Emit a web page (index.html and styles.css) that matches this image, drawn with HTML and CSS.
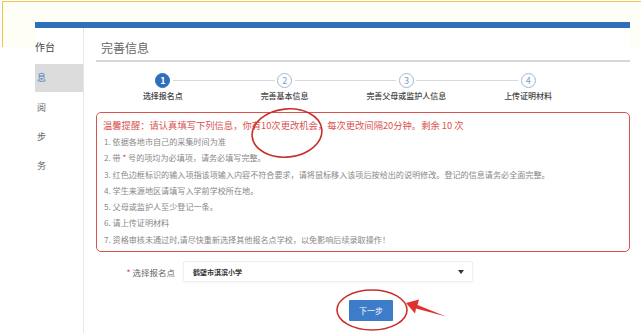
FILE: index.html
```html
<!DOCTYPE html>
<html lang="zh-CN">
<head>
<meta charset="utf-8">
<title>完善信息</title>
<link rel="stylesheet" href="styles.css">
</head>
<body>
<div class="frame"></div>
<div class="page">
  <div class="topbar"></div>
  <div class="layout">
    <aside class="side">
      <div class="side-head">作台</div>
      <div class="side-item active">息</div>
      <div class="side-item first">阅</div>
      <div class="side-item">步</div>
      <div class="side-item">务</div>
    </aside>
    <main class="main">
      <h1 class="title">完善信息</h1>
      <ol class="steps">
        <li class="step done"><span class="num">1</span><span class="label">选择报名点</span></li>
        <li class="step"><span class="num">2</span><span class="label">完善基本信息</span></li>
        <li class="step"><span class="num">3</span><span class="label">完善父母或监护人信息</span></li>
        <li class="step"><span class="num">4</span><span class="label">上传证明材料</span></li>
      </ol>
      <div class="notice">
        <p class="notice-head">温馨提醒：请认真填写下列信息，你有10次更改机会，每次更改间隔20分钟。剩余 10 次</p>
        <ol class="notice-list">
          <li>1. 依据各地市自己的采集时间为准</li>
          <li>2. 带 <span class="star">*</span> 号的项均为必填项，请务必填写完整。</li>
          <li>3. 红色边框标识的输入项指该项输入内容不符合要求，请将鼠标移入该项后按给出的说明修改。登记的信息请务必全面完整。</li>
          <li>4. 学生来源地区请填写入学前学校所在地。</li>
          <li>5. 父母或监护人至少登记一条。</li>
          <li>6. 请上传证明材料</li>
          <li>7. 资格审核未通过时,请尽快重新选择其他报名点学校，以免影响后续录取操作！</li>
        </ol>
      </div>
      <div class="form-row">
        <label class="form-label"><span class="star">*</span> 选择报名点</label>
        <div class="select"><span class="select-text">鹤壁市淇滨小学</span><span class="caret"></span></div>
      </div>
      <div class="btn-row"><button class="btn">下一步</button></div>
    </main>
  </div>
</div>
<svg class="marks" width="641" height="333" viewBox="0 0 641 333">
  <ellipse cx="287" cy="133" rx="35" ry="24" transform="rotate(-6 287 133)" fill="none" stroke="#c8302c" stroke-width="1.6"/>
  <ellipse cx="372" cy="310" rx="35" ry="20" fill="none" stroke="#c8302c" stroke-width="1.6"/>
  <polygon points="406,303 419,299.5 417.5,305 446,316.5 416,308.5 415,313.5" fill="#e0312b"/>
</svg>
</body>
</html>
```
FILE: styles.css
```css
* { box-sizing: border-box; }
html, body {
  margin: 0;
  padding: 0;
  background: #fff;
  width: 641px;
  height: 333px;
  overflow: hidden;
  font-family: "Noto Sans CJK SC", "Noto Sans", sans-serif;
}
.frame {
  position: absolute;
  left: 2px;
  top: 1px;
  width: 639px;
  height: 46px;
  border-top: 1.5px solid #f1c64a;
  border-left: 1.5px solid #f1c64a;
  background: #fffef6;
}
.page {
  position: relative;
  width: 595px;
  margin-left: 35px;
  padding-top: 22px;
}
.topbar {
  height: 6px;
  background: #2f6fba;
}
.layout {
  display: flex;
  height: 305px;
  background: #fff;
}
.side {
  width: 49px;
  flex: none;
  border-right: 1px solid #e6e6e6;
  font-size: 9.5px;
  color: #555;
}
.side-head {
  height: 36px;
  padding-top: 12px;
  line-height: 14px;
  font-size: 10px;
  color: #444;
}
.side-item {
  height: 29px;
  line-height: 29px;
  padding-left: 2px;
  color: #666;
  font-size: 9px;
}
.side-item.active {
  height: 28px;
  line-height: 28px;
  background: #dcdcdc;
  color: #4a7fc0;
}
.side-item.first { margin-top: 1px; }
.main {
  flex: 1;
  padding-left: 12px;
}
.title {
  margin: 0;
  padding: 13px 0 5px 5px;
  line-height: 14px;
  font-size: 12px;
  font-weight: normal;
  color: #666;
  border-bottom: 2px solid #d6d6d6;
}
.steps {
  list-style: none;
  margin: 11px 0 11px 6px;
  padding: 0;
  width: 487px;
  display: grid;
  grid-template-columns: repeat(4, 1fr);
}
.step {
  position: relative;
  display: flex;
  flex-direction: column;
  align-items: center;
}
.step::after {
  content: "";
  position: absolute;
  top: 7px;
  left: calc(50% + 10px);
  width: calc(100% - 20px);
  border-top: 1px solid #d9d9d9;
}
.step:last-child::after { display: none; }
.num {
  width: 15px;
  height: 15px;
  border-radius: 50%;
  border: 1px solid #9cb7da;
  color: #7f9cc4;
  font-size: 9px;
  line-height: 13px;
  text-align: center;
}
.step.done .num {
  background: #2f6fba;
  border-color: #2f6fba;
  color: #fff;
  font-weight: bold;
}
.label {
  margin-top: 3px;
  line-height: 10px;
  font-size: 8px;
  color: #444;
  font-weight: 500;
}
.notice {
  border: 1.5px solid #d9534f;
  border-radius: 5px;
  padding: 5px 6px 3px 6px;
}
.notice-head {
  margin: 0;
  line-height: 14px;
  font-size: 9.3px;
  color: #d9534f;
}
.notice-list {
  list-style: none;
  margin: 2px 0 0 1px;
  padding: 0;
}
.notice-list li {
  line-height: 16.3px;
  font-size: 8.1px;
  color: #888;
  white-space: nowrap;
}
.star { color: #e04040; }
.form-row {
  display: flex;
  align-items: center;
  margin-top: 9px;
}
.form-label {
  width: 79px;
  text-align: right;
  font-size: 8.5px;
  color: #666;
}
.select {
  margin-left: 8px;
  width: 290px;
  height: 21px;
  border: 1px solid #eee;
  border-radius: 2px;
  box-shadow: 0 1px 2px rgba(0,0,0,0.04);
  display: flex;
  align-items: center;
  justify-content: space-between;
  padding: 0 8px 0 9px;
}
.select-text {
  font-size: 7px;
  font-weight: bold;
  color: #333;
}
.caret {
  width: 0;
  height: 0;
  border-left: 3px solid transparent;
  border-right: 3px solid transparent;
  border-top: 4px solid #333;
}
.btn-row {
  margin-top: 18px;
  padding-left: 253px;
}
.btn {
  display: block;
  width: 44px;
  height: 21px;
  padding: 0;
  border: none;
  border-radius: 1px;
  background: #3d7cc9;
  color: #fff;
  font-family: inherit;
  font-size: 8px;
}
.marks {
  position: absolute;
  left: 0;
  top: 0;
  pointer-events: none;
}
```
